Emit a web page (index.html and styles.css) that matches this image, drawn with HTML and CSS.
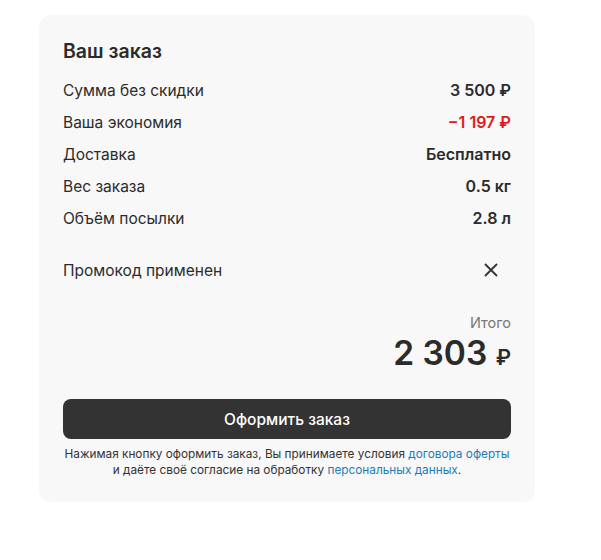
FILE: index.html
```html
<!DOCTYPE html>
<html lang="ru">
<head>
<meta charset="utf-8">
<link rel="stylesheet" href="styles.css">
</head>
<body>
<div class="card">
  <h2 class="title">Ваш заказ</h2>
  <div class="rows">
    <div class="row"><span>Сумма без скидки</span><span class="val">3 500 ₽</span></div>
    <div class="row"><span>Ваша экономия</span><span class="val red">−1 197 ₽</span></div>
    <div class="row"><span>Доставка</span><span class="val">Бесплатно</span></div>
    <div class="row"><span>Вес заказа</span><span class="val">0.5 кг</span></div>
    <div class="row"><span>Объём посылки</span><span class="val">2.8 л</span></div>
  </div>
  <div class="promo">
    <span>Промокод применен</span>
    <svg class="close" width="16" height="16" viewBox="0 0 16 16"><path d="M2 2L14 14M14 2L2 14" stroke="#333" stroke-width="1.8" fill="none"/></svg>
  </div>
  <div class="total">
    <div class="total-label">Итого</div>
    <div class="total-sum">2 303 <span class="rub">₽</span></div>
  </div>
  <button class="btn">Оформить заказ</button>
  <p class="note">Нажимая кнопку оформить заказ, Вы принимаете условия <a href="#">договора оферты</a><br>и даёте своё согласие на обработку <a href="#">персональных данных</a>.</p>
</div>
</body>
</html>
```
FILE: styles.css
```css
* { box-sizing: border-box; }
body {
  margin: 0;
  background: #fff;
  font-family: Inter, "Noto Sans", sans-serif;
  color: #2b2b2b;
}
.card {
  margin: 15px 0 0 39px;
  width: 496px;
  height: 487px;
  background: #f8f8f8;
  border-radius: 12px;
  padding: 24px 24px 0 24px;
}
.title {
  margin: 0;
  font-size: 19.5px;
  font-weight: 600;
  line-height: 24px;
  color: #2b2b2b;
}
.rows {
  margin-top: 11px;
  display: flex;
  flex-direction: column;
}
.row, .promo {
  display: flex;
  justify-content: space-between;
  align-items: center;
  height: 32px;
  font-size: 15.5px;
}
.val { font-weight: 600; font-size: 16px; }
.red { color: #e01818; }
.promo { margin-top: 20px; }
.close { margin-right: 12px; }
.total {
  margin-top: 28px;
  text-align: right;
}
.total-label {
  font-size: 14.5px;
  color: #777;
  line-height: 18px;
}
.total-sum {
  font-size: 33.5px;
  font-weight: 600;
  line-height: 40px;
  margin-top: 1px;
}
.rub { font-size: 21px; }
.btn {
  display: block;
  width: 100%;
  height: 40px;
  margin-top: 21px;
  border: 0;
  border-radius: 8px;
  background: #333;
  color: #fff;
  font-family: inherit;
  font-size: 15.5px;
  font-weight: 500;
}
.note {
  margin: 7px -14px 0;
  text-align: center;
  font-size: 11.8px;
  line-height: 16px;
  color: #333;
  white-space: nowrap;
}
.note a { color: #1d7bb5; text-decoration: none; }
```
